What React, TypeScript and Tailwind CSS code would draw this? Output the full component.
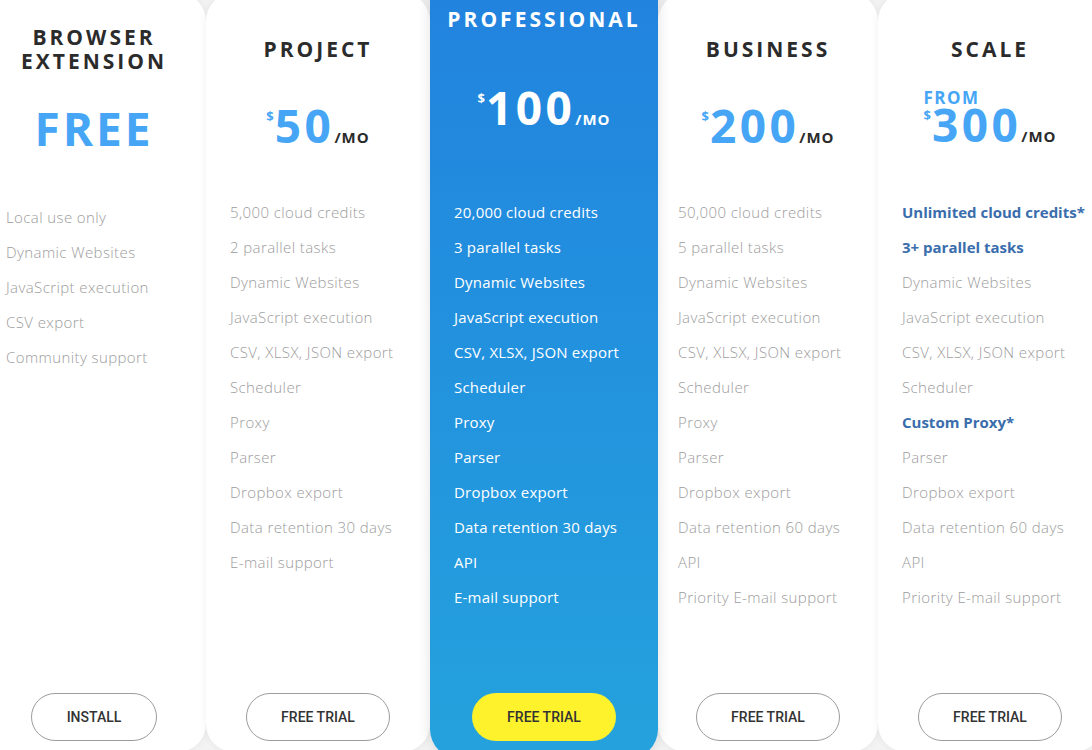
import React from "react";

type Feature = { text: string; strong?: boolean };

const plain = (list: string[]): Feature[] => list.map((text) => ({ text }));

const projectFeatures = plain([
  "5,000 cloud credits",
  "2 parallel tasks",
  "Dynamic Websites",
  "JavaScript execution",
  "CSV, XLSX, JSON export",
  "Scheduler",
  "Proxy",
  "Parser",
  "Dropbox export",
  "Data retention 30 days",
  "E-mail support",
]);

const proFeatures = plain([
  "20,000 cloud credits",
  "3 parallel tasks",
  "Dynamic Websites",
  "JavaScript execution",
  "CSV, XLSX, JSON export",
  "Scheduler",
  "Proxy",
  "Parser",
  "Dropbox export",
  "Data retention 30 days",
  "API",
  "E-mail support",
]);

const businessFeatures = plain([
  "50,000 cloud credits",
  "5 parallel tasks",
  "Dynamic Websites",
  "JavaScript execution",
  "CSV, XLSX, JSON export",
  "Scheduler",
  "Proxy",
  "Parser",
  "Dropbox export",
  "Data retention 60 days",
  "API",
  "Priority E-mail support",
]);

const scaleFeatures: Feature[] = [
  { text: "Unlimited cloud credits*", strong: true },
  { text: "3+ parallel tasks", strong: true },
  { text: "Dynamic Websites" },
  { text: "JavaScript execution" },
  { text: "CSV, XLSX, JSON export" },
  { text: "Scheduler" },
  { text: "Custom Proxy*", strong: true },
  { text: "Parser" },
  { text: "Dropbox export" },
  { text: "Data retention 60 days" },
  { text: "API" },
  { text: "Priority E-mail support" },
];

const extFeatures = plain([
  "Local use only",
  "Dynamic Websites",
  "JavaScript execution",
  "CSV export",
  "Community support",
]);

function Title({
  children,
  light,
  h = "h-[112px]",
}: {
  children: React.ReactNode;
  light?: boolean;
  h?: string;
}) {
  return (
    <div className={`${h} flex items-center justify-center`}>
      <h2
        className={`text-center text-[21px] leading-[24px] font-bold tracking-[3px] ${
          light ? "text-white" : "text-[#2b2b2b]"
        }`}
      >
        {children}
      </h2>
    </div>
  );
}

function Price({ amount, light }: { amount: string; light?: boolean }) {
  return (
    <div className={`flex items-baseline ${light ? "text-white" : "text-[#46a6f5]"}`}>
      <span className="self-start text-[13px] leading-[13px] font-bold mt-[5px] mr-[1px]">$</span>
      <span className="text-[46px] leading-[40px] font-bold tracking-[3.5px]">{amount}</span>
      <span
        className={`text-[15px] leading-[15px] font-bold tracking-[1px] ${
          light ? "text-white" : "text-[#2b2b2b]"
        }`}
      >
        /MO
      </span>
    </div>
  );
}

function FeatureList({ items, light }: { items: Feature[]; light?: boolean }) {
  return (
    <ul className="flex flex-col">
      {items.map((f) => (
        <li
          key={f.text}
          className={`h-[35px] flex items-center text-[15px] whitespace-nowrap ${
            light
              ? "text-white tracking-[0.2px]"
              : f.strong
              ? "text-[#3a6dac] font-bold"
              : "text-[#9c9c9c] font-light tracking-[0.4px]"
          }`}
        >
          {f.text}
        </li>
      ))}
    </ul>
  );
}

function OutlineButton({ label, wide = true }: { label: string; wide?: boolean }) {
  return (
    <button
      className={`${
        wide ? "w-[144px]" : "w-[126px]"
      } h-[48px] rounded-full border border-[#9c9c9c] bg-white text-[14px] font-medium text-[#333] [font-family:Roboto,sans-serif]`}
    >
      {label}
    </button>
  );
}

function WhiteCard({
  title,
  price,
  features,
  className = "",
  pad = "pl-[24px]",
}: {
  title: React.ReactNode;
  price: React.ReactNode;
  features: Feature[];
  className?: string;
  pad?: string;
}) {
  return (
    <div
      className={`shrink-0 h-[759px] rounded-[28px] bg-white shadow-[0_0_8px_rgba(0,0,0,0.06)] flex flex-col ${className}`}
    >
      <div className="h-[202px]">
        <Title>{title}</Title>
        <div className="flex justify-center">{price}</div>
      </div>
      <div className={pad}>
        <FeatureList items={features} />
      </div>
      <div className="mt-auto pb-[11px] flex justify-center">
        <OutlineButton label="FREE TRIAL" />
      </div>
    </div>
  );
}

export default function App() {
  return (
    <div className="w-[1092px] h-[750px] overflow-hidden bg-[#f3f3f3] [font-family:'Open_Sans',sans-serif]">
      <div className="flex items-start ml-[-18px] mt-[-7px]">
        {/* browser extension */}
        <div className="shrink-0 w-[224px] h-[759px] rounded-[28px] bg-white shadow-[0_0_8px_rgba(0,0,0,0.06)] flex flex-col">
          <div className="h-[207px]">
            <Title>
              BROWSER
              <br />
              EXTENSION
            </Title>
            <div className="flex justify-center pt-[3px]">
              <span className="text-[46px] leading-[40px] font-bold tracking-[3px] text-[#46a6f5]">
                FREE
              </span>
            </div>
          </div>
          <div className="pl-[24px]">
            <FeatureList items={extFeatures} />
          </div>
          <div className="mt-auto pb-[11px] flex justify-center">
            <OutlineButton label="INSTALL" wide={false} />
          </div>
        </div>

        <WhiteCard
          className="w-[224px]"
          title="PROJECT"
          price={<Price amount="50" />}
          features={projectFeatures}
        />

        {/* professional */}
        <div className="relative z-10 shrink-0 w-[228px] h-[789px] mt-[-23px] rounded-[30px] bg-linear-to-b from-[#2282de] to-[#25a2dd] shadow-[0_0_14px_rgba(0,0,0,0.12)] flex flex-col">
          <div className="h-[225px]">
            <Title light h="h-[98px]">
              PROFESSIONAL
            </Title>
            <div className="flex justify-center pt-[19px]">
              <Price amount="100" light />
            </div>
          </div>
          <div className="pl-[24px]">
            <FeatureList items={proFeatures} light />
          </div>
          <div className="mt-auto pb-[18px] flex justify-center">
            <button className="w-[144px] h-[48px] rounded-full bg-[#fdf22c] text-[14px] font-medium text-[#333] [font-family:Roboto,sans-serif]">
              FREE TRIAL
            </button>
          </div>
        </div>

        <WhiteCard
          className="w-[220px]"
          pad="pl-[20px]"
          title="BUSINESS"
          price={<Price amount="200" />}
          features={businessFeatures}
        />

        <WhiteCard
          className="w-[224px]"
          title="SCALE"
          price={
            <div className="flex flex-col items-start mt-[-13px]">
              <span className="text-[17px] leading-[11px] font-bold tracking-[1.5px] text-[#46a6f5] mb-[1px]">
                FROM
              </span>
              <Price amount="300" />
            </div>
          }
          features={scaleFeatures}
        />
      </div>
    </div>
  );
}
